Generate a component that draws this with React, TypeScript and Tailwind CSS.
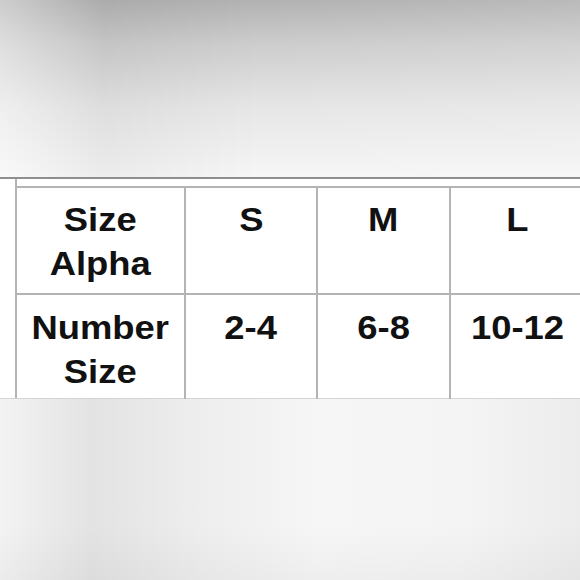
const header = ["S", "M", "L"];
const numbers = ["2-4", "6-8", "10-12"];

const cellText = "font-['Liberation_Sans',Arial,sans-serif] font-bold text-[34px] leading-[44px] text-[#111] text-center";

function Label({ lines }: { lines: string[] }) {
  return (
    <span className="inline-block scale-x-[1.07]">
      {lines.map((l, i) => (
        <span key={i} className="block">
          {l}
        </span>
      ))}
    </span>
  );
}

export default function App() {
  return (
    <div className="w-[580px] h-[580px] overflow-hidden flex flex-col bg-[#f0f0f0]">
      {/* blurred backdrop above the chart */}
      <div className="h-[177px] shrink-0 bg-[linear-gradient(to_right,rgba(255,255,255,0.35)_0%,rgba(0,0,0,0.04)_18%,rgba(255,255,255,0)_45%,rgba(255,255,255,0.1)_100%),linear-gradient(to_bottom,#b2b2b2_0%,#cdcdcd_25%,#e6e6e6_60%,#f6f6f6_100%)]" />
      <div className="h-[2px] shrink-0 bg-[#8f8f8f]" />

      <div className="h-[220px] shrink-0 bg-white pl-[15px] border-b border-[#d4d4d4]">
        <div className="h-full border-l-2 border-[#b4b4b4] pt-[7px]">
          <div className="w-[570px] border-t-2 border-[#b4b4b4]">
            <div className="grid grid-cols-[169px_132px_133px_132px] h-[107px] border-b-2 border-[#b4b4b4]">
              <div className={`${cellText} pt-[9px] border-r-2 border-[#b4b4b4]`}>
                <Label lines={["Size", "Alpha"]} />
              </div>
              {header.map((h, i) => (
                <div
                  key={h}
                  className={`${cellText} pt-[9px] ${i < header.length - 1 ? "border-r-2 border-[#b4b4b4]" : ""}`}
                >
                  <Label lines={[h]} />
                </div>
              ))}
            </div>
            <div className="grid grid-cols-[169px_132px_133px_132px] h-[104px]">
              <div className={`${cellText} pt-[10px] border-r-2 border-[#b4b4b4]`}>
                <Label lines={["Number", "Size"]} />
              </div>
              {numbers.map((n, i) => (
                <div
                  key={n}
                  className={`${cellText} pt-[10px] ${i < numbers.length - 1 ? "border-r-2 border-[#b4b4b4]" : ""}`}
                >
                  <Label lines={[n]} />
                </div>
              ))}
            </div>
          </div>
        </div>
      </div>

      {/* blurred backdrop below the chart */}
      <div className="grow bg-[linear-gradient(to_bottom,rgba(255,255,255,0)_70%,rgba(0,0,0,0.03)_100%),linear-gradient(to_right,#f3f3f3_0%,#e3e3e3_16%,#eeeeee_35%,#f6f6f6_55%,#f4f4f4_80%,#ececec_100%)]" />
    </div>
  );
}
